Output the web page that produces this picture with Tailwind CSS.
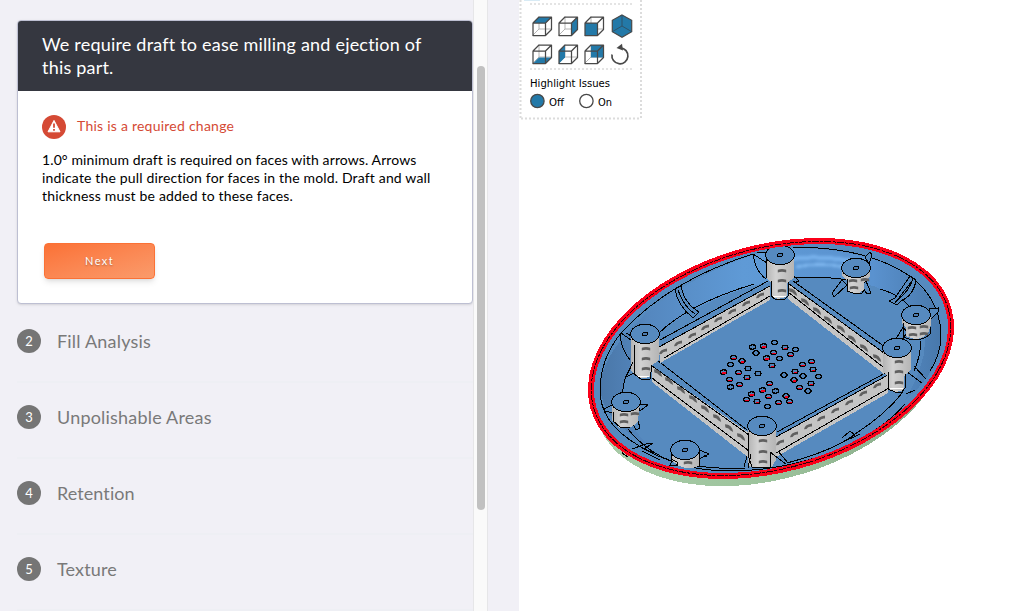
<!DOCTYPE html>
<html lang="en">
<head>
<meta charset="utf-8">
<title>Design Analysis</title>
<script src="https://cdn.jsdelivr.net/npm/@tailwindcss/browser@4"></script>
</head>
<body class="h-[611px] w-[1026px] overflow-hidden bg-white">
<div class="flex h-[611px] w-[1026px] font-['Lato',sans-serif]">
  <aside class="flex h-full w-[473px] shrink-0 flex-col overflow-hidden bg-[#f1f0f6] pt-5 pl-[17px]">
    <section class="h-[284px] shrink-0 overflow-hidden rounded-[4px] border border-[#bdbfd2] bg-white shadow-sm">
      <header class="h-[70px] bg-[#353740] px-6 pt-3 text-[18px] leading-[23px] text-white">
        <div class="w-fit whitespace-nowrap tracking-[0.2px]">We require draft to ease milling and ejection of</div>
        <div class="w-fit whitespace-nowrap tracking-[0.2px]">this part.</div>
      </header>
      <div class="px-6 pt-6">
        <div class="flex h-6 items-center gap-[11px] text-[14px] text-[#d54a35]">
          <svg class="size-6" viewBox="0 0 24 24"><circle cx="12" cy="12" r="12" fill="#d54a35"/><path d="M12 5.4 18 16.8H6Z" fill="#fff" stroke="#fff" stroke-width="1" stroke-linejoin="round"/><path d="M12 8.5v4.2M12 14v1.8" stroke="#d54a35" stroke-width="1.8"/></svg>
          <span class="pb-[3px] tracking-[0.24px]">This is a required change</span>
        </div>
        <div class="mt-3 text-[14px] leading-[18px] text-black">
          <div class="w-fit whitespace-nowrap tracking-[0.11px]">1.0° minimum draft is required on faces with arrows. Arrows</div>
          <div class="w-fit whitespace-nowrap tracking-[0.16px]">indicate the pull direction for faces in the mold. Draft and wall</div>
          <div class="w-fit whitespace-nowrap tracking-[0.18px]">thickness must be added to these faces.</div>
        </div>
        <button class="mt-[38px] ml-[2px] block h-9 w-[111px] rounded-[4px] border border-[#fb7135] bg-linear-to-br from-[#fb7135] to-[#fa9b6b] text-[11px] tracking-[1.4px] text-white shadow-md shadow-black/10 [text-shadow:0_1px_2px_#0005]">Next</button>
      </div>
    </section>
    <ol class="text-[18px] text-[#797979]">
      <li class="flex h-[79px] shrink-0 items-center gap-4 border-b-2 border-[#eeeff4] pb-[3px]"><span class="flex size-6 items-center justify-center rounded-full bg-[#757575] pt-px text-[13px] text-white">2</span><span class="pt-px tracking-[0.2px]">Fill Analysis</span></li>
      <li class="flex h-[76px] shrink-0 items-center gap-4 border-b-2 border-[#eeeff4] pb-[6px]"><span class="flex size-6 items-center justify-center rounded-full bg-[#757575] pt-px text-[13px] text-white">3</span><span class="tracking-[0.2px]">Unpolishable Areas</span></li>
      <li class="flex h-[76px] shrink-0 items-center gap-4 border-b-2 border-[#eeeff4] pb-[6px]"><span class="flex size-6 items-center justify-center rounded-full bg-[#757575] pt-px text-[13px] text-white">4</span><span class="tracking-[0.08px]">Retention</span></li>
      <li class="flex h-[76px] shrink-0 items-center gap-4 border-b-2 border-[#eeeff4] pb-[6px]"><span class="flex size-6 items-center justify-center rounded-full bg-[#757575] pt-px text-[13px] text-white">5</span><span class="tracking-[0.15px]">Texture</span></li>
    </ol>
  </aside>
  <div class="w-[15px] shrink-0 border-x border-[#e6e6e8] bg-[#fafafa] pt-[66px] pl-[3px]">
    <div class="h-[444px] w-2 rounded-full bg-[#c1c1c1]"></div>
  </div>
  <div class="w-[31px] shrink-0 bg-[#f1f0f6]"></div>
  <main class="flex flex-1 flex-col bg-white">
    <div class="h-[120px] w-[124px] font-['DejaVu_Sans',sans-serif]">
      <svg class="block" width="124" height="120" viewBox="519 0 124 120">
        <path d="M524 0h16" stroke="#d8ebf5" stroke-width="2"/>
        <g fill="none" stroke="#dcdcdc" stroke-width="2" stroke-dasharray="2 2"><path d="M520.5 0V119"/><path d="M641 0V119"/><path d="M521 118.5H641"/><path d="M530 4H632M530 69H632" stroke-width="1.6"/></g>
        <defs>
          <g id="hid" fill="none" stroke="#b4b4b4" stroke-width="1"><path d="M6.5 0V12.5H19M6.5 12.5L0 19"/></g>
          <path id="cube" d="M0.5 6.5H13V19H0.5ZM0.5 6.5L6.5 .5H19V13L13 19M13 6.5L19 .5" fill="none" stroke="#484848" stroke-width="1.25" stroke-linejoin="round"/>
        </defs>
        <g transform="translate(532.5 16.5)"><use href="#hid"/><path d="M.5 6.5 6.5.5H19L13 6.5Z" fill="#2379a8"/><use href="#cube"/></g>
        <g transform="translate(558.5 16.5)"><use href="#hid"/><path d="M13 6.5 19 .5V13L13 19Z" fill="#2379a8"/><use href="#cube"/></g>
        <g transform="translate(584.5 16.5)"><use href="#hid"/><path d="M.5 6.5H13V19H.5Z" fill="#2379a8"/><use href="#cube"/></g>
        <path d="M622 15 631.7 20.3V31.7L622 37.2 612.3 31.7V20.3Z" fill="#2379a8" stroke="#484848" stroke-width="1.2"/><path d="M622 15V26L612.3 31.7M622 26 631.7 31.7" fill="none" stroke="#2f5368"/>
        <g transform="translate(532.5 44.5)"><use href="#hid"/><path d="M.5 19 6.5 13H19L13 19Z" fill="#2379a8"/><use href="#cube"/></g>
        <g transform="translate(558.5 44.5)"><use href="#hid"/><path d="M.5 6.5 6.5.5V13L.5 19Z" fill="#2379a8"/><use href="#cube"/></g>
        <g transform="translate(584.5 44.5)"><use href="#hid"/><path d="M6.5.5H19V13H6.5Z" fill="#2379a8"/><use href="#cube"/></g>
        <path d="M612 54.5A8 8 0 1 0 620.5 47.8" fill="none" stroke="#484848" stroke-width="1.7"/><path d="M616.5 48 622 43.7 623 50.5Z" fill="#484848"/>
        <text x="530" y="87" font-size="11" textLength="80" lengthAdjust="spacingAndGlyphs">Highlight Issues</text>
        <circle cx="537.4" cy="101" r="6.7" fill="#2379a8" stroke="#484848" stroke-width="1.3"/>
        <circle cx="586.4" cy="101" r="6.7" fill="#fff" stroke="#484848" stroke-width="1.3"/>
        <text x="549" y="106" font-size="11" textLength="15" lengthAdjust="spacingAndGlyphs">Off</text>
        <text x="598" y="106" font-size="11" textLength="14" lengthAdjust="spacingAndGlyphs">On</text>
      </svg>
    </div>
    <svg class="block" width="507" height="491" viewBox="519 120 507 491" shape-rendering="crispEdges">
      <defs>
        <linearGradient id="wall" x1="0" x2="1"><stop offset="0" stop-color="#4a77a8"/><stop offset=".15" stop-color="#5588c0"/><stop offset=".42" stop-color="#5f9ad6"/><stop offset=".8" stop-color="#5a92cf"/><stop offset="1" stop-color="#4878ab"/></linearGradient>
        <linearGradient id="cyl" x1="0" x2="1"><stop offset="0" stop-color="#b4b4b4"/><stop offset=".35" stop-color="#d2d2d2"/><stop offset="1" stop-color="#b5b5b5"/></linearGradient>
        <linearGradient id="grn" x1="0" x2="1"><stop offset="0" stop-color="#a9cba8"/><stop offset=".4" stop-color="#9cc39c"/><stop offset="1" stop-color="#86a486"/></linearGradient>
        <filter id="soft" x="-20%" y="-100%" width="140%" height="300%"><feGaussianBlur stdDeviation="1.6"/></filter>
        <filter id="mark"><feGaussianBlur stdDeviation=".55"/></filter>
        <path id="m" d="M-4 3.2Q-3-1.8 4-2.6V.6Q0 0-1.5 3Z" fill="#606060"/>
        <path id="w" d="M-4-3.8Q3-3.5 4.2 4L1.5 2.6Q0 0-3.6-.6Z" fill="#606060"/>
        <path id="s" d="M-4.2-1.2Q0-3 4.2-1.2V1.4Q0 0-4.2 1.4Z" fill="#606060"/>
        <g id="h"><ellipse rx="3" ry="2.3" fill="#4f82b8" stroke="#000" stroke-width="1.3"/></g>
        <g id="r"><ellipse rx="3" ry="2.3" fill="#4f82b8" stroke="#000" stroke-width="1.3"/><path d="M-1.5 1H2" stroke="#f00020" stroke-width="1.8"/></g>
        <g id="cap"><ellipse rx="14.3" ry="9.7" fill="#568abf" stroke="#000"/><ellipse rx="2.5" ry="1.8" fill="#4a7cb0" stroke="#000" stroke-width="1.3"/></g>
        <clipPath id="in"><ellipse cx="771" cy="358.5" rx="182" ry="108.5" transform="rotate(-15.5 771 358.5)"/></clipPath>
      </defs>
      <ellipse cx="771" cy="369" rx="181" ry="109.5" transform="rotate(-16.8 771 369)" fill="url(#grn)"/>
      <path d="M622 449V453L628 457" fill="none" stroke="#000"/>
      <ellipse cx="771" cy="358.5" rx="184" ry="110" transform="rotate(-15.5 771 358.5)" fill="#568abf"/>
      <g clip-path="url(#in)">
        <path d="M600 385C603 350 650 290 755 254Q780 247 800 248C880 250 936 278 941 330Q943 370 905 400C920 375 928 350 924 332C915 305 880 277 820 277Q730 278 658 334C632 357 622 380 623 398Q624 422 650 447C620 430 600 410 600 385Z" fill="url(#wall)"/>
        <g filter="url(#soft)"><path d="M792 259Q815 255 852 261" stroke="#78b2ed" stroke-width="4" fill="none"/><path d="M796 267Q820 262 844 267" stroke="#82bbf3" stroke-width="2.5" fill="none"/></g>
        <g fill="none" stroke="#000">
          <path d="M600 392C600 366 610 346 622 332Q670 280 753 254M793 247Q850 247 888 264C920 278 936 299 940 324Q944 350 930 371M600 392Q601 420 630 440Q655 458 690 467Q750 479 825 455Q880 434 905 404"/>
          <path d="M658 334Q688 304 754 284M794 278Q838 275 868 285M880 289Q900 295 909 306M622 404Q622 378 631 368M628 429Q640 445 662 457Q682 468 745 469M787 463Q835 450 855 434Q885 415 903 392"/>
          <path d="M660 340 768 281M793 281 885 347M657 360 747 430M777 432 887 372"/>
        </g>
        <path d="M675 289 681 286Q684 303 699 312L693 318Q677 305 675 289Z" fill="#568abf" stroke="#000"/><path d="M678 290Q684 307 695 314" fill="none" stroke="#000"/>
        <path d="M753 254Q755 271 766 279M753 254 767 263M757 253 768 252M793 275 799 281 794 283" fill="none" stroke="#000"/>
        <path d="M910 276 916 280Q914 295 901 301L897 305 889 301 895 298Z" fill="#568abf" stroke="#000"/><path d="M913 278Q910 290 897 301M912 281 895 303" fill="none" stroke="#000"/>
        <path d="M632 449 646 444 653 443 644 449 654 453M642 451 660 460M842 438 850 431 855 435 843 442 860 434" fill="none" stroke="#000"/>
        <path d="M621 333 620 336Q622 350 630 360M621 333 631 340M626 333 633 337" fill="none" stroke="#000"/>
        <path d="M906 394 915 390M907 372 922 383M914 366 926 379M921 341Q920 358 914 371" fill="none" stroke="#000"/>
      </g>
      <g fill="#c4c4c4" stroke="#000">
        <path d="M659 347 770 286V300L660 363Z" stroke="none"/><path d="M664 358 770 296" fill="none"/><path d="M659 347 770 286" fill="none"/>
        <path d="M789 284 884 353V374L788 299Z" stroke="none"/><path d="M789 284 884 353M788 292 883 367" fill="none"/>
        <path d="M652 366 749 433V458L652 382Z" stroke="none"/><path d="M652 366 749 435M652 378 749 451" fill="none"/>
        <path d="M776 437 888 375V393L776 457Z" stroke="none"/><path d="M776 437 888 375M776 453 889 388" fill="none"/>
      </g>
      <g shape-rendering="auto" filter="url(#mark)"><use href="#m" x="663" y="351"/><use href="#m" x="678" y="343"/><use href="#m" x="692" y="335"/><use href="#m" x="705" y="327"/><use href="#m" x="718" y="319"/><use href="#m" x="732" y="311"/><use href="#m" x="746" y="303"/><use href="#m" x="760" y="295"/>
      <use href="#w" x="793" y="292"/><use href="#w" x="805" y="302"/><use href="#w" x="817" y="311"/><use href="#w" x="828" y="320"/><use href="#w" x="841" y="329"/><use href="#w" x="852" y="339"/><use href="#w" x="864" y="348"/><use href="#w" x="877" y="358"/>
      <use href="#w" x="658" y="373"/><use href="#w" x="669" y="381"/><use href="#w" x="681" y="390"/><use href="#w" x="693" y="399"/><use href="#w" x="705" y="409"/><use href="#w" x="717" y="418"/><use href="#w" x="729" y="428"/><use href="#w" x="741" y="437"/>
      <use href="#m" x="780" y="442"/><use href="#m" x="794" y="434"/><use href="#m" x="808" y="426"/><use href="#m" x="821" y="418"/><use href="#m" x="835" y="410"/><use href="#m" x="849" y="402"/><use href="#m" x="863" y="393"/><use href="#m" x="877" y="385"/></g>

      <!-- tall bosses -->
      <g stroke="#000">
        <path d="M766 255V278L772 283V297Q780 301 787 296V283L794 278V255Z" fill="url(#cyl)" stroke="none"/><path d="M766 255V278M771 281V296L775 299H785L788 296V282" fill="none"/><path d="M773 296H786" stroke="#fff"/>
        <path d="M631 333V370L636 376Q644 380 651 376V366L659 360V333Z" fill="url(#cyl)" stroke="none"/><path d="M634 345V374L641 379H650L652 365M633 362 626 377 634 373" fill="none"/><path d="M638 376H649" stroke="#fff"/>
        <path d="M748 426V466L756 468H771L776 460V426Z" fill="url(#cyl)" stroke="none"/><path d="M748 433V455L752 467H770V453M747 456 744 467M751 454 748 468M770 452 786 464M778 451 788 463" fill="none"/>
        <path d="M883 348V372L888 377V389L896 392 904 390V376L911 370V348Z" fill="url(#cyl)" stroke="none"/><path d="M888 372V389L895 392H902L905 388V374" fill="none"/><path d="M890 388H903" stroke="#fff"/>
      </g>
      <!-- short bosses and their gussets -->
      <g stroke="#000" fill="#568abf">
        <path d="M842 280 832 293 834 297 847 285ZM865 257 870 252 872 255 869 264ZM866 281 871 293 867 294 861 286Z"/>
        <path d="M842 268V276L847 281V291Q857 296 864 290V282L870 277V268Z" fill="url(#cyl)" stroke="none"/><path d="M847 279V291L853 293H862L865 289" fill="none"/>
        <path d="M929 309 938 308V312L931 319ZM903 327 896 339 902 341 907 332Z"/>
        <path d="M902 315V324L906 328V336Q919 343 928 333L931 325V315Z" fill="url(#cyl)" stroke="none"/><path d="M903 323V337Q919 344 930 334L931 327" fill="none"/>
        <path d="M612 405 604 409 605 411 613 413ZM638 404 648 405 640 411ZM636 414 640 428 636 430 632 422Z"/>
        <path d="M612 403V421L620 428Q632 430 638 421L640 403Z" fill="url(#cyl)" stroke="none"/><path d="M613 412V421L620 427H630" fill="none"/>
        <path d="M697 449 709 454 699 459ZM676 459 671 463 670 465 677 465Z"/>
        <path d="M671 451V460L679 466Q690 470 699 466V451Z" fill="url(#cyl)" stroke="none"/><path d="M671 452V459L677 462V466M699 452V466M704 455 707 457" fill="none"/>
      </g>
      <use href="#cap" x="780" y="255"/><use href="#cap" x="645" y="334"/><use href="#cap" x="762" y="426"/><use href="#cap" x="897" y="348"/>
      <use href="#cap" x="856" y="268"/><use href="#cap" x="916" y="315"/><use href="#cap" x="626" y="402"/><use href="#cap" x="685" y="450"/>
      <g shape-rendering="auto" filter="url(#mark)">
        <use href="#s" x="782" y="271"/><use href="#s" x="782" y="281"/><use href="#s" x="782" y="291"/>
        <use href="#s" x="646" y="349"/><use href="#s" x="646" y="359"/><use href="#s" x="646" y="369"/>
        <use href="#s" x="763" y="441"/><use href="#s" x="763" y="452"/><use href="#s" x="763" y="462"/>
        <use href="#s" x="899" y="362"/><use href="#s" x="899" y="372"/><use href="#s" x="899" y="383"/>
        <use href="#s" x="853" y="281"/><use href="#s" x="865" y="280"/><use href="#s" x="854" y="288"/>
        <use href="#s" x="912" y="328"/><use href="#s" x="924" y="327"/><use href="#s" x="913" y="335"/><use href="#s" x="924" y="334"/>
        <use href="#s" x="624" y="415"/><use href="#s" x="635" y="414"/><use href="#s" x="624" y="422"/><use href="#s" x="688" y="463"/>
      </g>
      <!-- speaker holes -->
      <g>
        <use href="#h" x="752.5" y="347"/><use href="#r" x="763.5" y="346"/><use href="#h" x="774.5" y="342.5"/><use href="#r" x="785" y="347.5"/><use href="#h" x="795.5" y="349.5"/><use href="#h" x="756" y="353"/><use href="#r" x="773.5" y="352.5"/><use href="#r" x="790.5" y="354.5"/><use href="#r" x="766.5" y="358"/><use href="#h" x="779.5" y="358.5"/><use href="#r" x="772" y="365.5"/>
        <use href="#r" x="733.5" y="357.5"/><use href="#r" x="742" y="361"/><use href="#h" x="730.5" y="364.5"/><use href="#h" x="748" y="368.5"/><use href="#r" x="723.5" y="372"/><use href="#r" x="738.5" y="372.5"/><use href="#h" x="758" y="373.5"/><use href="#r" x="729.5" y="379.5"/><use href="#r" x="747" y="377.5"/><use href="#r" x="739.5" y="384.5"/><use href="#h" x="730.5" y="387"/>
        <use href="#h" x="784" y="375"/><use href="#r" x="795" y="371.5"/><use href="#r" x="802.5" y="364.5"/><use href="#r" x="811.5" y="361.5"/><use href="#r" x="813" y="369.5"/><use href="#h" x="803" y="376"/><use href="#h" x="818.5" y="376.5"/><use href="#r" x="794" y="380"/><use href="#r" x="811" y="383.5"/><use href="#r" x="799.5" y="387.5"/><use href="#h" x="808" y="391"/>
        <use href="#r" x="769.5" y="383.5"/><use href="#r" x="762.5" y="390"/><use href="#h" x="775.5" y="391"/><use href="#r" x="751.5" y="394"/><use href="#r" x="768.5" y="396.5"/><use href="#r" x="786" y="396"/><use href="#r" x="746.5" y="399.5"/><use href="#r" x="757" y="401.5"/><use href="#r" x="778.5" y="402.5"/><use href="#r" x="789.5" y="401.5"/><use href="#h" x="767.5" y="406.5"/>
      </g>
      <g fill="none" transform="rotate(-15.5 771 358.5)"><ellipse cx="771" cy="358.5" rx="184.3" ry="110.7" stroke="#fb0019" stroke-width="6"/><ellipse cx="771" cy="358.5" rx="184" ry="110.2" stroke="#25060b" stroke-width="1" stroke-dasharray="7 1.5 3 1"/></g>
    </svg>
  </main>
</div>
</body>
</html>
